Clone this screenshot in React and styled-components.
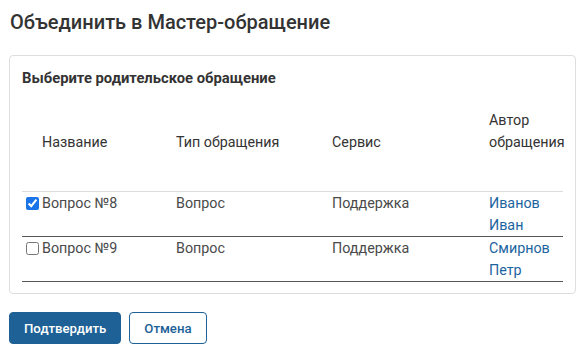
import React, { useState } from "react";
import styled, { createGlobalStyle } from "styled-components";

const Global = createGlobalStyle`
  html, body { margin: 0; padding: 0; background: #fff; }
  body { font-family: Roboto, "Liberation Sans", Arial, sans-serif; color: #333; }
`;

const Page = styled.div`
  padding: 10px 7px 10px 9px;
`;

const Title = styled.h1`
  margin: 0 0 21px 1px;
  font-size: 20px;
  line-height: 24px;
  font-weight: 500;
  color: #333;
`;

const Panel = styled.div`
  border: 1px solid #dedede;
  border-radius: 4px;
  padding: 14px 12px 11px 12px;
`;

const Label = styled.div`
  font-size: 14.8px;
  line-height: 16px;
  font-weight: 700;
  color: #333;
`;

const Table = styled.table`
  margin-top: 23px;
  width: 541px;
  border-collapse: collapse;
  table-layout: fixed;
  font-size: 14.3px;
  line-height: 22px;
`;

const Th = styled.th`
  text-align: left;
  font-weight: 400;
  color: #333;
  vertical-align: bottom;
  padding: 0 1px 38px 1px;
  border-bottom: 1px solid #dcdcdc;
`;

const Td = styled.td`
  vertical-align: top;
  padding: 0 1px;
  color: #4a4a4a;
  border-bottom: 1px solid #555;
`;

const CheckTd = styled(Td)`
  padding: 0;
`;

const Check = styled.input.attrs({ type: "checkbox" })`
  display: block;
  width: 13px;
  height: 13px;
  margin: 5px 0 0 4px;
  accent-color: #1b73e8;
`;

const Author = styled.a`
  color: #1c64a0;
  text-decoration: none;
`;

const Actions = styled.div`
  display: flex;
  gap: 8px;
  margin-top: 18px;
`;

const Button = styled.button`
  height: 32px;
  padding: 0 14px;
  border-radius: 4px;
  font-family: Roboto, "Liberation Sans", Arial, sans-serif;
  font-size: 13.2px;
  font-weight: 500;
  cursor: pointer;
  border: 1px solid #1d6197;
  background: ${(p) => (p.$primary ? "#1d6197" : "#fff")};
  color: ${(p) => (p.$primary ? "#fff" : "#1d6197")};
`;

const rows = [
  { id: 8, name: "Вопрос №8", type: "Вопрос", service: "Поддержка", author: ["Иванов", "Иван"] },
  { id: 9, name: "Вопрос №9", type: "Вопрос", service: "Поддержка", author: ["Смирнов", "Петр"] },
];

export default function App() {
  const [selected, setSelected] = useState(8);
  return (
    <Page>
      <Global />
      <Title>Объединить в Мастер-обращение</Title>
      <Panel>
        <Label>Выберите родительское обращение</Label>
        <Table>
          <colgroup>
            <col style={{ width: 19 }} />
            <col style={{ width: 134 }} />
            <col style={{ width: 156 }} />
            <col style={{ width: 157 }} />
            <col style={{ width: 75 }} />
          </colgroup>
          <thead>
            <tr>
              <Th />
              <Th>Название</Th>
              <Th>Тип обращения</Th>
              <Th>Сервис</Th>
              <Th>Автор обращения</Th>
            </tr>
          </thead>
          <tbody>
            {rows.map((r) => (
              <tr key={r.id}>
                <CheckTd>
                  <Check checked={selected === r.id} onChange={() => setSelected(r.id)} />
                </CheckTd>
                <Td>{r.name}</Td>
                <Td>{r.type}</Td>
                <Td>{r.service}</Td>
                <Td>
                  <Author href="#">
                    {r.author[0]}
                    <br />
                    {r.author[1]}
                  </Author>
                </Td>
              </tr>
            ))}
          </tbody>
        </Table>
      </Panel>
      <Actions>
        <Button $primary>Подтвердить</Button>
        <Button>Отмена</Button>
      </Actions>
    </Page>
  );
}
